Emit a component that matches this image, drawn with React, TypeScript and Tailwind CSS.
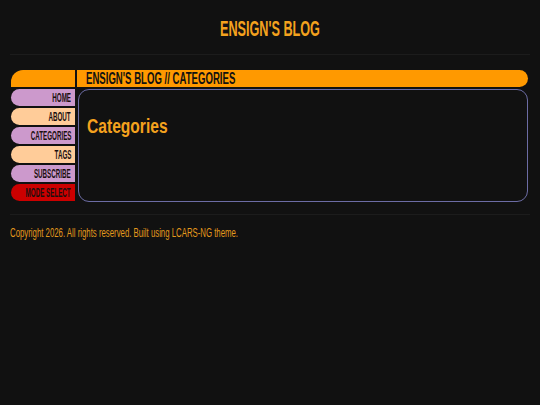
const nav = [
  { label: "HOME", color: "bg-[#cc99cc]" },
  { label: "ABOUT", color: "bg-[#ffcc99]" },
  { label: "CATEGORIES", color: "bg-[#cc99cc]" },
  { label: "TAGS", color: "bg-[#ffcc99]" },
  { label: "SUBSCRIBE", color: "bg-[#cc99cc]" },
  { label: "MODE SELECT", color: "bg-[#cc0000]" },
];

const font = { fontFamily: '"Liberation Sans", Arial, sans-serif' };

export default function App() {
  return (
    <main className="min-h-screen bg-[#111111] text-[#f0a020]" style={font}>
      <header className="mx-[10px] flex h-[55px] items-center justify-center border-b border-[#1c1c1c] pt-[3px]">
        <h1 className="whitespace-nowrap text-[22px] font-bold leading-none text-[#f4a21e]">
          <span className="inline-block origin-center scale-x-[0.575]">ENSIGN'S BLOG</span>
        </h1>
      </header>

      <section className="ml-[11px] mr-[12px] mt-[15px] grid grid-cols-[64px_1fr] gap-[2px]">
        <div className="h-[17px] rounded-tl-[12px] bg-[#ff9900]" />
        <div className="flex h-[17px] items-center rounded-r-full bg-[#ff9900] pl-[9px]">
          <span className="inline-block origin-left scale-x-[0.6] whitespace-nowrap text-[16px] font-bold leading-none text-[#111111]">
            ENSIGN'S BLOG // CATEGORIES
          </span>
        </div>

        <nav className="flex flex-col gap-[2px]">
          {nav.map((item) => (
            <a
              key={item.label}
              className={`flex h-[17px] items-center justify-end rounded-l-[9px] pr-[4px] ${item.color}`}
            >
              <span className="inline-block origin-right scale-x-[0.52] whitespace-nowrap text-[12px] font-bold leading-none text-[#1a0f0f]">
                {item.label}
              </span>
            </a>
          ))}
        </nav>

        <div className="ml-[1px] h-[113px] rounded-[11px] border border-[#6c6ca4] px-[8px] pt-[26px]">
          <h2 className="whitespace-nowrap text-[20px] font-bold leading-none text-[#f4a21e]">
            <span className="inline-block origin-left scale-x-[0.78]">Categories</span>
          </h2>
        </div>
      </section>

      <footer className="mx-[10px] mt-[12px] border-t border-[#1c1c1c] pt-[12px]">
        <p className="whitespace-nowrap text-[12px] leading-none text-[#e49a1c]">
          <span className="inline-block origin-left scale-x-[0.65]">
            Copyright 2026. All rights reserved. Built using LCARS-NG theme.
          </span>
        </p>
      </footer>
    </main>
  );
}
